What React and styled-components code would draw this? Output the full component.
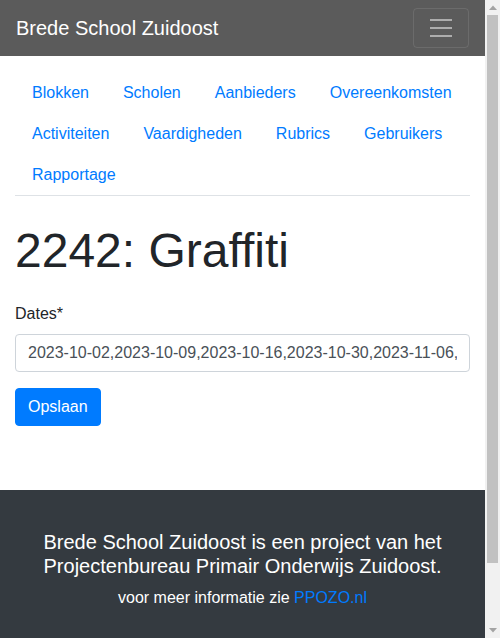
import React from 'react';
import styled, { createGlobalStyle } from 'styled-components';

const GlobalStyle = createGlobalStyle`
  * {
    box-sizing: border-box;
  }
  body {
    margin: 0;
    font-family: "Liberation Sans", Arial, sans-serif;
    font-size: 16px;
    line-height: 1.5;
    color: #212529;
    background: #fff;
    overflow: hidden;
  }
`;

const Window = styled.div`
  display: flex;
  height: 100vh;
`;

const Page = styled.div`
  flex: 1;
  min-width: 0;
  overflow: hidden;
`;

const ScrollRail = styled.div`
  width: 15px;
  flex: none;
  display: flex;
  flex-direction: column;
  background: #f1f1f1;
`;

const ScrollArrow = styled.div`
  height: 15px;
  flex: none;
  display: flex;
  align-items: center;
  justify-content: center;
`;

const ScrollTrack = styled.div`
  flex: 1;
  padding: 0 2px;
`;

const ScrollThumb = styled.div`
  height: ${({ size }) => size}px;
  background: #c1c1c1;
`;

const Navbar = styled.nav`
  display: flex;
  align-items: center;
  justify-content: space-between;
  height: 56px;
  padding: 8px 16px;
  background: #5b5b5b;
`;

const Brand = styled.a`
  color: #fff;
  font-size: 20px;
  line-height: 30px;
  text-decoration: none;
`;

const Toggler = styled.button`
  width: 56px;
  height: 40px;
  padding: 0;
  display: flex;
  align-items: center;
  justify-content: center;
  background: transparent;
  border: 1px solid rgba(255, 255, 255, 0.1);
  border-radius: 4px;
`;

const Container = styled.main`
  padding: 16px 15px 64px;
`;

const Tabs = styled.ul`
  display: flex;
  flex-wrap: wrap;
  list-style: none;
  margin: 0;
  padding: 0;
  border-bottom: 1px solid #dee2e6;
`;

const TabLink = styled.a`
  display: block;
  padding: 8px 16px;
  margin-bottom: -1px;
  border: 1px solid transparent;
  color: #007bff;
  text-decoration: none;
`;

const Title = styled.h1`
  margin: 26px 0 22px;
  font-size: 48px;
  font-weight: 500;
  line-height: 1.2;
`;

const FormGroup = styled.div`
  margin-bottom: 16px;
`;

const Label = styled.label`
  display: inline-block;
  margin-bottom: 8px;
`;

const Input = styled.input`
  display: block;
  width: 100%;
  height: 38px;
  padding: 6px 12px;
  font: inherit;
  color: #495057;
  border: 1px solid #ced4da;
  border-radius: 4px;
  background: #fff;
`;

const Button = styled.button`
  height: 38px;
  padding: 6px 12px;
  font: inherit;
  color: #fff;
  background: #007bff;
  border: 1px solid #007bff;
  border-radius: 4px;
`;

const Footer = styled.footer`
  background: #343a40;
  color: #fff;
  text-align: center;
  padding: 40px 15px 98px;
`;

const FooterTitle = styled.h5`
  margin: 0 0 8px;
  font-size: 20px;
  font-weight: 500;
  line-height: 1.2;
`;

const FooterNote = styled.p`
  margin: 0;
  a {
    color: #007bff;
    text-decoration: none;
  }
`;

const tabs = [
  'Blokken',
  'Scholen',
  'Aanbieders',
  'Overeenkomsten',
  'Activiteiten',
  'Vaardigheden',
  'Rubrics',
  'Gebruikers',
  'Rapportage',
];

const Arrow = ({ down }) => (
  <svg width="8" height="5" viewBox="0 0 8 5">
    <path d={down ? 'M0 0h8L4 4.5z' : 'M0 5h8L4 0.5z'} fill="#a3a3a3" />
  </svg>
);

export default function App() {
  return (
    <>
      <GlobalStyle />
      <Window>
        <Page>
          <Navbar>
            <Brand href="#">Brede School Zuidoost</Brand>
            <Toggler aria-label="menu">
              <svg width="30" height="30" viewBox="0 0 30 30">
                <path
                  d="M4 7h22M4 15h22M4 23h22"
                  stroke="rgba(255,255,255,0.5)"
                  strokeWidth="2"
                />
              </svg>
            </Toggler>
          </Navbar>
          <Container>
            <Tabs>
              {tabs.map((t) => (
                <li key={t}>
                  <TabLink href="#">{t}</TabLink>
                </li>
              ))}
            </Tabs>
            <Title>2242: Graffiti</Title>
            <FormGroup>
              <Label>Dates*</Label>
              <Input
                readOnly
                value="2023-10-02,2023-10-09,2023-10-16,2023-10-30,2023-11-06,2023-11-13"
              />
            </FormGroup>
            <Button>Opslaan</Button>
          </Container>
          <Footer>
            <FooterTitle>
              Brede School Zuidoost is een project van het Projectenbureau
              Primair Onderwijs Zuidoost.
            </FooterTitle>
            <FooterNote>
              voor meer informatie zie <a href="#">PPOZO.nl</a>
            </FooterNote>
          </Footer>
        </Page>
        <ScrollRail>
          <ScrollArrow>
            <Arrow />
          </ScrollArrow>
          <ScrollTrack>
            <ScrollThumb size={548} />
          </ScrollTrack>
          <ScrollArrow>
            <Arrow down />
          </ScrollArrow>
        </ScrollRail>
      </Window>
    </>
  );
}
